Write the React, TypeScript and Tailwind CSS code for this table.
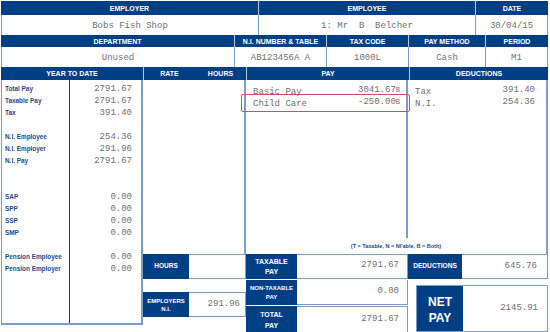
import React from "react";

const ytd: [string, string][] = [
  ["Total Pay", "2791.67"],
  ["Taxable Pay", "2791.67"],
  ["Tax", "391.40"],
  ["", ""],
  ["N.I. Employee", "254.36"],
  ["N.I. Employer", "291.96"],
  ["N.I. Pay", "2791.67"],
  ["", ""],
  ["", ""],
  ["SAP", "0.00"],
  ["SPP", "0.00"],
  ["SSP", "0.00"],
  ["SMP", "0.00"],
  ["", ""],
  ["Pension Employee", "0.00"],
  ["Pension Employer", "0.00"],
];

const H = ({ className = "", children }: { className?: string; children?: React.ReactNode }) => (
  <div className={`bg-[#013f85] text-white font-bold flex items-center justify-center ${className}`}>
    {children}
  </div>
);

const V = ({ className = "", children }: { className?: string; children?: React.ReactNode }) => (
  <div className={`bg-white flex font-['Liberation_Mono',monospace] text-[9px] text-[#707070] whitespace-pre ${className}`}>
    {children}
  </div>
);

export default function App() {
  return (
    <div className="relative w-[550px] h-[332px] overflow-hidden bg-white pl-[1px] pt-[1px] font-['Liberation_Sans',Arial,sans-serif]">
      {/* Row 1 */}
      <div className="flex h-[14px] w-[547px]">
        <H className="w-[257px] text-[7px] leading-none">EMPLOYER</H>
        <H className="w-[217px] text-[7px] leading-none border-l border-[#b9c8dc]">EMPLOYEE</H>
        <H className="w-[73px] text-[7px] leading-none border-l border-[#b9c8dc]">DATE</H>
      </div>
      <div className="flex h-[20px] w-[547px] border-r border-[#7b9cc6]">
        <V className="w-[257px] border-l border-[#7b9cc6] items-center justify-center pt-[3px]">Bobs Fish Shop</V>
        <V className="w-[217px] border-l border-[#7b9cc6] items-center justify-center pt-[3px]">1: Mr  B  Belcher</V>
        <V className="w-[72px] border-l border-[#7b9cc6] items-center justify-center pt-[3px]">30/04/15</V>
      </div>
      {/* Row 2 */}
      <div className="flex h-[12px] w-[547px]">
        <H className="w-[233px] text-[7px] leading-none">DEPARTMENT</H>
        <H className="w-[92px] text-[7px] leading-none border-l border-[#b9c8dc]">N.I. NUMBER &amp; TABLE</H>
        <H className="w-[82px] text-[7px] leading-none border-l border-[#b9c8dc]">TAX CODE</H>
        <H className="w-[77px] text-[7px] leading-none border-l border-[#b9c8dc]">PAY METHOD</H>
        <H className="w-[63px] text-[7px] leading-none border-l border-[#b9c8dc]">PERIOD</H>
      </div>
      <div className="flex h-[20px] w-[547px] border-r border-[#7b9cc6]">
        <V className="w-[233px] border-l border-[#7b9cc6] items-center justify-center pt-[3px]">Unused</V>
        <V className="w-[92px] border-l border-[#7b9cc6] items-center justify-center pt-[3px]">AB123456A A</V>
        <V className="w-[82px] border-l border-[#7b9cc6] items-center justify-center pt-[3px]">1000L</V>
        <V className="w-[77px] border-l border-[#7b9cc6] items-center justify-center pt-[3px]">Cash</V>
        <V className="w-[62px] border-l border-[#7b9cc6] items-center justify-center pt-[3px]">M1</V>
      </div>
      {/* Row 3 header */}
      <div className="flex h-[13px] w-[547px]">
        <H className="w-[142px] text-[7px] leading-none">YEAR TO DATE</H>
        <div className="w-[103px] border-l border-[#b9c8dc] bg-[#013f85] text-white font-bold text-[7px] leading-none flex items-center">
          <span className="w-1/2 text-center">RATE</span>
          <span className="w-1/2 text-center">HOURS</span>
        </div>
        <H className="w-[163px] text-[7px] leading-none border-l border-[#b9c8dc]">PAY</H>
        <H className="w-[139px] text-[7px] leading-none border-l border-[#b9c8dc]">DEDUCTIONS</H>
      </div>

      {/* Body */}
      <div className="flex h-[252px] w-[547px]">
        {/* YTD */}
        <div className="flex w-[142px] h-[245px] border-l border-b-2 border-r-2 border-[#7b9cc6]">
          <div className="w-[68px] border-r border-[#013f85] pt-[3px] pl-[3px]">
            {ytd.map(([l], i) => (
              <div key={i} className="h-[12px] leading-[12px] text-[6.4px] font-bold text-[#1b4a8a] whitespace-nowrap">
                {l}
              </div>
            ))}
          </div>
          <div className="flex-1 pt-[3px] pr-[9px] text-right">
            {ytd.map(([, v], i) => (
              <div key={i} className="h-[12px] leading-[12px] font-['Liberation_Mono',monospace] text-[9px] text-[#707070]">
                {v}
              </div>
            ))}
          </div>
        </div>

        {/* Right side */}
        <div className="flex flex-col w-[405px]">
          <div className="flex h-[174px]">
            <div className="w-[103px] border-r-2 border-[#7b9cc6]" />
            <div className="flex flex-col w-[302px]">
              <div className="flex h-[158px]">
                <div className="w-[162px] border-r-2 border-[#7b9cc6] pt-[6px] pl-[7px] pr-[6px] font-['Liberation_Mono',monospace] text-[9px] text-[#707070]">
                  <div className="flex justify-between h-[12px] leading-[12px]">
                    <span>Basic Pay</span>
                    <span className="-mt-[2px]">
                      3041.67<span className="text-[7px]">B</span>
                    </span>
                  </div>
                  <div className="flex justify-between h-[12px] leading-[12px]">
                    <span>Child Care</span>
                    <span className="-mt-[2px]">
                      -250.00<span className="text-[7px]">B</span>
                    </span>
                  </div>
                </div>
                <div className="w-[140px] border-r-2 border-[#7b9cc6] pt-[6px] pl-[7px] pr-[11px] font-['Liberation_Mono',monospace] text-[9px] text-[#707070]">
                  <div className="flex justify-between h-[12px] leading-[12px]">
                    <span>Tax</span>
                    <span className="-mt-[2px]">391.40</span>
                  </div>
                  <div className="flex justify-between h-[12px] leading-[12px]">
                    <span>N.I.</span>
                    <span className="-mt-[2px]">254.36</span>
                  </div>
                </div>
              </div>
              <div className="h-[16px] border-r-2 border-[#7b9cc6] flex items-center justify-center text-[5.5px] font-bold text-[#1b4a8a]">
                (T = Taxable, N = NI'able, B = Both)
              </div>
            </div>
          </div>

          <div className="flex h-[78px]">
            {/* Hours / Employers NI */}
            <div className="w-[103px] flex flex-col">
              <div className="flex h-[25px]">
                <H className="w-[46px] text-[6.5px] leading-none">HOURS</H>
                <div className="flex-1 bg-white border-y border-r border-[#7b9cc6]" />
              </div>
              <div className="h-[13px]" />
              <div className="flex h-[25px]">
                <H className="w-[46px] text-[6px] leading-[8.5px] flex-col pt-[1px]">
                  <span>EMPLOYERS</span>
                  <span>N.I.</span>
                </H>
                <V className="flex-1 border-y border-r border-[#7b9cc6] items-center justify-end pr-[5px] pt-[1px]">291.96</V>
              </div>
            </div>

            {/* Taxable / Non-taxable / Total */}
            <div className="w-[162px] flex flex-col">
              <div className="flex h-[25px]">
                <H className="w-[51px] text-[7px] leading-[10px] flex-col">
                  <span>TAXABLE</span>
                  <span>PAY</span>
                </H>
                <V className="flex-1 border-y border-r border-[#7b9cc6] justify-end items-start pr-[8px] pt-[4px]">2791.67</V>
              </div>
              <div className="flex h-[25px] mt-[1px]">
                <H className="w-[51px] text-[6px] leading-[9px] flex-col">
                  <span>NON-TAXABLE</span>
                  <span>PAY</span>
                </H>
                <V className="flex-1 border-b border-r border-[#7b9cc6] items-center justify-end pr-[8px]">0.00</V>
              </div>
              <div className="flex flex-1 mt-[1px]">
                <H className="w-[51px] text-[7px] leading-[11px] flex-col pt-[2px]">
                  <span>TOTAL</span>
                  <span>PAY</span>
                </H>
                <V className="flex-1 border-t border-r border-[#7b9cc6] items-center justify-end pr-[8px]">2791.67</V>
              </div>
            </div>

            {/* Deductions / Net pay */}
            <div className="w-[140px] flex flex-col">
              <div className="flex h-[25px]">
                <H className="w-[54px] text-[6.6px] leading-none">DEDUCTIONS</H>
                <V className="flex-1 border-y border-r border-[#7b9cc6] items-center justify-end pr-[10px]">645.76</V>
              </div>
              <div className="flex ml-[8px] mt-[6px] flex-1 border border-[#7b9cc6]">
                <H className="w-[46px] text-[12px] leading-[16px] flex-col pt-[3px]">
                  <span>NET</span>
                  <span>PAY</span>
                </H>
                <V className="flex-1 justify-end items-start pr-[9px] pt-[16px]">2145.91</V>
              </div>
            </div>
          </div>
        </div>
      </div>

      {/* Highlight overlay */}
      <div className="absolute left-[241px] top-[94px] w-[169px] h-[18px] border-[1.5px] border-[#d24c64] rounded-[2px] pointer-events-none" />
    </div>
  );
}
